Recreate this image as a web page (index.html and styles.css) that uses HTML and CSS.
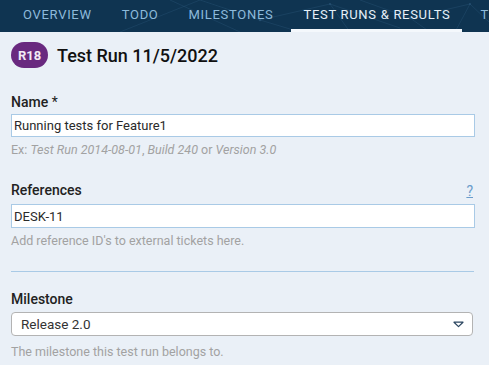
FILE: index.html
```html
<!DOCTYPE html>
<html lang="en">
<head>
<meta charset="utf-8">
<title>Test Run</title>
<link rel="stylesheet" href="styles.css">
</head>
<body>
<nav class="tabs">
  <svg class="net" width="489" height="32" viewBox="0 0 489 32" aria-hidden="true">
    <g stroke="#2a5577" stroke-width="0.6" fill="none" opacity="0.7">
      <path d="M170 0 L240 32 M200 0 L260 20 L330 4 L400 28 M360 0 L410 18 L470 4 L489 22 M410 18 L430 32 M260 20 L300 32 M470 4 L455 32 M330 4 L350 32 M120 32 L200 0"/>
    </g>
    <g fill="#2a5577" opacity="0.8">
      <circle cx="260" cy="20" r="1.3"/><circle cx="410" cy="18" r="1.3"/><circle cx="330" cy="4" r="1"/><circle cx="470" cy="4" r="1"/>
    </g>
  </svg>
  <a class="tab">OVERVIEW</a>
  <a class="tab">TODO</a>
  <a class="tab">MILESTONES</a>
  <a class="tab active">TEST RUNS &amp; RESULTS</a>
  <a class="tab">TEST</a>
</nav>
<main class="form">
  <div class="header">
    <span class="badge">R18</span>
    <h1 class="title">Test Run 11/5/2022</h1>
  </div>

  <div class="field field-name">
    <label class="label">Name <span class="req">*</span></label>
    <input class="text-input" type="text" value="Running tests for Feature1">
    <div class="hint">Ex: <em>Test Run 2014-08-01</em>, <em>Build 240</em> or <em>Version 3.0</em></div>
  </div>

  <div class="field field-refs">
    <div class="label-row">
      <label class="label">References</label>
      <a class="help">?</a>
    </div>
    <input class="text-input" type="text" value="DESK-11">
    <div class="hint">Add reference ID's to external tickets here.</div>
  </div>

  <hr class="divider">

  <div class="field field-milestone">
    <label class="label">Milestone</label>
    <div class="select">
      <span class="select-value">Release 2.0</span>
      <svg class="caret" width="11" height="7" viewBox="0 0 11 7"><path d="M1 1.2 H10 L5.5 5.6 Z" fill="none" stroke="#2b4660" stroke-width="1.2" stroke-linejoin="round"/></svg>
    </div>
    <div class="hint">The milestone this test run belongs to.</div>
  </div>
</main>
</body>
</html>
```

FILE: styles.css
```css
* { box-sizing: border-box; }
html, body { margin: 0; padding: 0; }
body {
  background: #eaf0f7;
  font-family: Roboto, "Liberation Sans", sans-serif;
  color: #222;
  width: 489px;
  height: 365px;
  overflow: hidden;
}
.tabs {
  position: relative;
  display: flex;
  height: 32px;
  background: #0f3451;
  padding-left: 11px;
  white-space: nowrap;
  overflow: hidden;
}
.net { position: absolute; left: 0; top: 0; }
.tab {
  position: relative;
  display: block;
  padding: 0 12px;
  margin-right: 6px;
  height: 32px;
  line-height: 30px;
  font-size: 13px;
  letter-spacing: 0.7px;
  color: #8dbadb;
}
.tab.active {
  color: #e6f0f9;
  border-bottom: 3px solid #f4f8fc;
  line-height: 29px;
}
.form {
  padding: 10px 14px 0 11px;
}
.header {
  display: flex;
  align-items: center;
  gap: 9px;
}
.badge {
  display: inline-flex;
  align-items: center;
  justify-content: center;
  width: 37px;
  height: 26px;
  border-radius: 13px;
  background: #69297f;
  color: #f2e9f5;
  font-size: 13px;
  font-weight: 700;
}
.title {
  margin: 0;
  font-size: 18px;
  font-weight: 500;
  color: #111;
}
.field-name { margin-top: 26px; }
.label {
  display: block;
  font-size: 14px;
  line-height: 17px;
  font-weight: 500;
  color: #222;
}
.req { font-weight: 400; }
.field .text-input {
  display: block;
  width: 100%;
  height: 23px;
  margin-top: 3px;
  padding: 0 2px;
  border: 1px solid #a9cae6;
  background: #fff;
  font-family: inherit;
  font-size: 13px;
  color: #2a2a2a;
  outline: none;
}
.hint {
  margin-top: 5px;
  font-size: 12.5px;
  line-height: 16px;
  color: #a2a2a2;
}
.field-refs { margin-top: 22px; }
.label-row {
  display: flex;
  justify-content: space-between;
  align-items: flex-end;
  height: 19px;
}
.field-refs .text-input { height: 24px; margin-top: 5px; }
.help {
  font-size: 14px;
  color: #6a9ccb;
  text-decoration: underline;
  margin-right: 2px;
}
.divider {
  margin: 22px 1px 0 0;
  border: 0;
  border-top: 1px solid #a9cae6;
}
.field-milestone { margin-top: 19px; }
.select {
  display: flex;
  align-items: center;
  justify-content: space-between;
  height: 24px;
  margin-top: 4px;
  margin-right: 2px;
  padding: 0 8px 0 9px;
  border: 1px solid #b3b3b3;
  border-radius: 4px;
  background: #fff;
  font-size: 13.5px;
  color: #333;
}
.caret { margin-top: 1px; }
.field-milestone .hint { margin-top: 8px; }
```
